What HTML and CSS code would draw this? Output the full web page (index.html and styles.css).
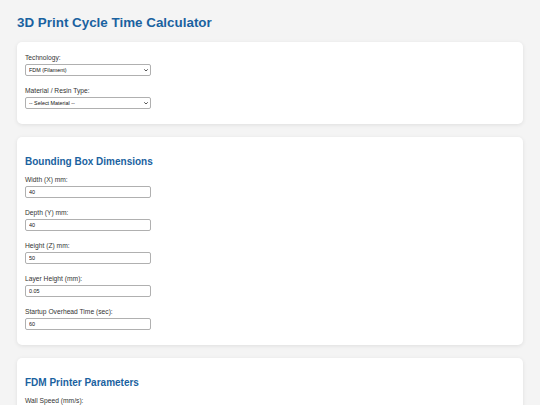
FILE: index.html
```html
<!DOCTYPE html>
<html lang="en">
<head>
<meta charset="utf-8">
<title>3D Print Cycle Time Calculator</title>
<link rel="stylesheet" href="styles.css">
</head>
<body>
<div class="page">
  <h1 class="title">3D Print Cycle Time Calculator</h1>

  <section class="card">
    <div class="field">
      <label class="label" for="tech">Technology:</label>
      <div class="select-wrap">
        <select class="control select" id="tech">
          <option>FDM (Filament)</option>
          <option>SLA (Resin)</option>
        </select>
        <svg class="chevron" viewBox="0 0 8 5" aria-hidden="true"><path d="M1 1 L4 4 L7 1" fill="none" stroke="#222" stroke-width="1.6" stroke-linecap="round" stroke-linejoin="round"/></svg>
      </div>
    </div>
    <div class="field">
      <label class="label" for="mat">Material / Resin Type:</label>
      <div class="select-wrap">
        <select class="control select" id="mat">
          <option>-- Select Material --</option>
        </select>
        <svg class="chevron" viewBox="0 0 8 5" aria-hidden="true"><path d="M1 1 L4 4 L7 1" fill="none" stroke="#222" stroke-width="1.6" stroke-linecap="round" stroke-linejoin="round"/></svg>
      </div>
    </div>
  </section>

  <section class="card">
    <h2 class="section-title">Bounding Box Dimensions</h2>
    <div class="field">
      <label class="label" for="w">Width (X) mm:</label>
      <input class="control" id="w" type="text" value="40">
    </div>
    <div class="field">
      <label class="label" for="d">Depth (Y) mm:</label>
      <input class="control" id="d" type="text" value="40">
    </div>
    <div class="field">
      <label class="label" for="h">Height (Z) mm:</label>
      <input class="control" id="h" type="text" value="50">
    </div>
    <div class="field">
      <label class="label" for="lh">Layer Height (mm):</label>
      <input class="control" id="lh" type="text" value="0.05">
    </div>
    <div class="field">
      <label class="label" for="so">Startup Overhead Time (sec):</label>
      <input class="control" id="so" type="text" value="60">
    </div>
  </section>

  <section class="card">
    <h2 class="section-title">FDM Printer Parameters</h2>
    <div class="field">
      <label class="label" for="ws">Wall Speed (mm/s):</label>
      <input class="control" id="ws" type="text" value="40">
    </div>
    <div class="field">
      <label class="label" for="is">Infill Speed (mm/s):</label>
      <input class="control" id="is" type="text" value="60">
    </div>
  </section>
</div>
</body>
</html>
```

FILE: styles.css
```css
html, body {
  margin: 0;
  padding: 0;
  background: #f4f4f4;
}

body {
  font-family: "Liberation Sans", Arial, sans-serif;
  color: #333;
}

.page {
  padding: 15.4px 17px 20px;
}

.title {
  margin: 0 0 10.3px;
  font-size: 13.4px;
  line-height: 16px;
  font-weight: bold;
  color: #1a62a0;
}

.card {
  background: #fff;
  border-radius: 5px;
  box-shadow: 0 1px 4px rgba(0, 0, 0, 0.09);
  padding: 12.6px 8px 4px;
  margin-bottom: 13px;
}

.section-title {
  margin: 6px 0 8.3px;
  font-size: 10px;
  line-height: 12px;
  font-weight: bold;
  color: #1a62a0;
}

.field {
  margin-bottom: 11px;
}

.label {
  display: block;
  font-size: 6.7px;
  line-height: 7.5px;
  margin-bottom: 2.5px;
  color: #333;
}

.control {
  display: block;
  box-sizing: border-box;
  width: 126px;
  height: 12px;
  margin: 0;
  padding: 0 3px;
  border: 1px solid #b0b0b0;
  border-radius: 2px;
  background: #fff;
  font-family: "Liberation Sans", Arial, sans-serif;
  font-size: 5.4px;
  color: #111;
}

.select-wrap {
  position: relative;
  width: 126px;
}

.select {
  -webkit-appearance: none;
  appearance: none;
  padding: 0 10px 0 3px;
}

.chevron {
  position: absolute;
  right: 3.5px;
  top: 4.6px;
  width: 4px;
  height: 2.6px;
  pointer-events: none;
}
```
